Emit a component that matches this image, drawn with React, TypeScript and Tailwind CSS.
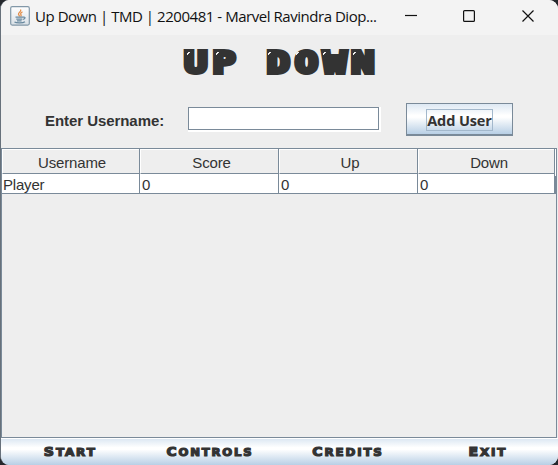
import React from "react";

const columns = [
  { name: "Username", value: "Player", cls: "w-[138px]", head: "pl-[2px]", cell: "pl-[1px]" },
  { name: "Score", value: "0", cls: "w-[139px]", head: "pl-[4px]", cell: "pl-[2px]" },
  { name: "Up", value: "0", cls: "w-[139px]", head: "pl-[3px]", cell: "pl-[2px]" },
  { name: "Down", value: "0", cls: "w-[137px]", head: "pl-[5px]", cell: "pl-[2px]" },
];

const menu = [
  { label: "START", scale: "scale-x-[1.09]" },
  { label: "CONTROLS", scale: "scale-x-[1.06]" },
  { label: "CREDITS", scale: "scale-x-[1.08]" },
  { label: "EXIT", scale: "scale-x-[1.08]" },
];

function JavaIcon() {
  return (
    <svg width="20" height="20" viewBox="0 0 20 20" fill="none">
      <defs>
        <linearGradient id="tile" x1="0" y1="0" x2="0" y2="1">
          <stop offset="0" stopColor="#ffffff" />
          <stop offset="1" stopColor="#d9e0e6" />
        </linearGradient>
      </defs>
      <rect x="0.7" y="0.7" width="18.6" height="18.4" rx="1.5" fill="url(#tile)" stroke="#8298a8" strokeWidth="1.2" />
      <path d="M10.5 3.5C12 5.5 8 6.5 8.5 8.2C8.8 9.2 9.8 9.8 9.5 10.6M12.5 5.8C10.5 7 10.3 7.7 11 8.8C11.4 9.5 11 10.1 10.6 10.5" stroke="#e3904d" strokeWidth="1.3" />
      <path d="M5.5 11.2H13.2M6.3 13.1H12.2M7 14.8H11.6M13 11.2C16 10.5 15.5 13 12.8 13.4M4.5 16C6.5 17.2 13 17.2 15 15.7" stroke="#69899f" strokeWidth="1.2" />
    </svg>
  );
}

function TitleBar() {
  return (
    <header className="flex h-[35px] shrink-0 items-center bg-[#f3f3f3] pl-[9px]">
      <div className="mb-[4px]"><JavaIcon /></div>
      <div className="mb-[3px] ml-[5px] w-[343px] whitespace-nowrap font-['Open_Sans','Noto_Sans',sans-serif] text-[15px] leading-[20px] tracking-[-0.46px] text-[#111]">
        Up Down | TMD | 2200481 - Marvel Ravindra Diop...
      </div>
      <svg className="mb-[3px] ml-[27px]" width="130" height="14" viewBox="0 0 130 14" fill="none" stroke="#111" strokeWidth="1.2">
        <path d="M0 6.5H12" />
        <rect x="58.6" y="1.6" width="10.8" height="10.8" rx="1" />
        <path d="M117.5 1.5L128.5 12.5M128.5 1.5L117.5 12.5" />
      </svg>
    </header>
  );
}

function Highlight({ cls }: { cls: string }) {
  return (
    <span className={`absolute top-[3px] h-[3px] w-[3px] ${cls}`}>
      <span className="absolute left-[1px] top-0 h-px w-[2px] bg-[#eee]" />
      <span className="absolute left-0 top-[1px] h-[2px] w-px bg-[#eee]" />
      <span className="absolute left-[1px] top-[1px] h-px w-px bg-[#eee]" />
    </span>
  );
}

export default function App() {
  return (
    <div className="h-[465px] w-[558px] overflow-hidden bg-[#25282d]">
      <div className="flex h-[465px] w-[558px] flex-col overflow-hidden rounded-[9px] border-l border-[#67717b] bg-[#eeeeee] font-['Liberation_Sans',Arial,sans-serif] text-[#333]">
        <TitleBar />
        <div className="flex h-[55px] shrink-0 justify-center pt-[14px]">
          <h1 className="relative h-[26px] w-[194px]">
            <span className="block origin-left scale-x-[1.3] whitespace-pre pl-[1px] font-['DejaVu_Sans_Mono',monospace] text-[29.5px] font-bold leading-[28px] tracking-[3.9px] [word-spacing:-1.5px] [-webkit-text-stroke:4px_#333]">UP DOWN</span>
            <Highlight cls="left-[4px]" />
            <Highlight cls="left-[33px]" />
            <Highlight cls="left-[85px]" />
            <Highlight cls="left-[113px]" />
            <Highlight cls="left-[140px]" />
            <Highlight cls="left-[170px]" />
          </h1>
        </div>
        <div className="flex h-[58px] shrink-0 items-start pl-[44px] pt-[13px]">
          <label className="mt-[9px] w-[143px] whitespace-nowrap text-[15px] font-bold leading-[18px] tracking-[-0.06px]">Enter Username:</label>
          <div className="mt-[4px] h-[25px] w-[193px] border-b-2 border-r-2 border-white">
            <input aria-label="Username" className="block h-[23px] w-[191px] border border-[#7a8a99] bg-white outline-none" />
          </div>
          <button className="ml-[25px] flex h-[33px] w-[107px] items-center justify-center border border-b-2 border-[#7a8a99] bg-[linear-gradient(#dde8f3,#ffffff_38%,#ffffff_44%,#b8cfe5)]">
            <span className="mt-[1px] flex h-[22px] w-[67px] items-center justify-center whitespace-nowrap border border-[#a3b8cc] pt-[2px] font-['Open_Sans','Noto_Sans',sans-serif] text-[14.5px] font-bold tracking-[-0.1px]">Add User</span>
          </button>
        </div>
        <main className="flex h-[290px] w-[556px] shrink-0 flex-col border border-[#7a8a99]">
          <div className="flex">
            {columns.map((c) => (
              <div key={c.name} className={`border-r border-[#7a8a99] ${c.cls}`}>
                <div className={`flex h-[25px] items-center justify-center border-b border-l border-t border-b-[#7a8a99] border-l-white border-t-white pt-[3px] text-[15px] tracking-[-0.15px] ${c.head}`}>{c.name}</div>
                <div className={`flex h-[20px] items-center border-b border-[#7a8a99] bg-white pt-[4px] text-[15px] tracking-[-0.2px] ${c.cell}`}>{c.value}</div>
              </div>
            ))}
            <div className="h-[45px] w-px">
              <div className="h-[27px] bg-white" />
              <div className="h-[18px] bg-[#7a8a99]" />
            </div>
          </div>
        </main>
        <nav className="flex h-[27px] shrink-0 border-t border-white bg-[linear-gradient(#dde8f3,#ffffff_33%,#ffffff_40%,#b8cfe5)]">
          {menu.map((m) => (
            <button key={m.label} className="flex w-[139px] items-center justify-center">
              <span className={`block whitespace-nowrap font-['DejaVu_Sans',sans-serif] text-[11px] font-bold leading-[14px] tracking-[1.7px] first-letter:text-[13px] [-webkit-text-stroke:1.2px_#333] ${m.scale}`}>{m.label}</span>
            </button>
          ))}
        </nav>
      </div>
    </div>
  );
}
